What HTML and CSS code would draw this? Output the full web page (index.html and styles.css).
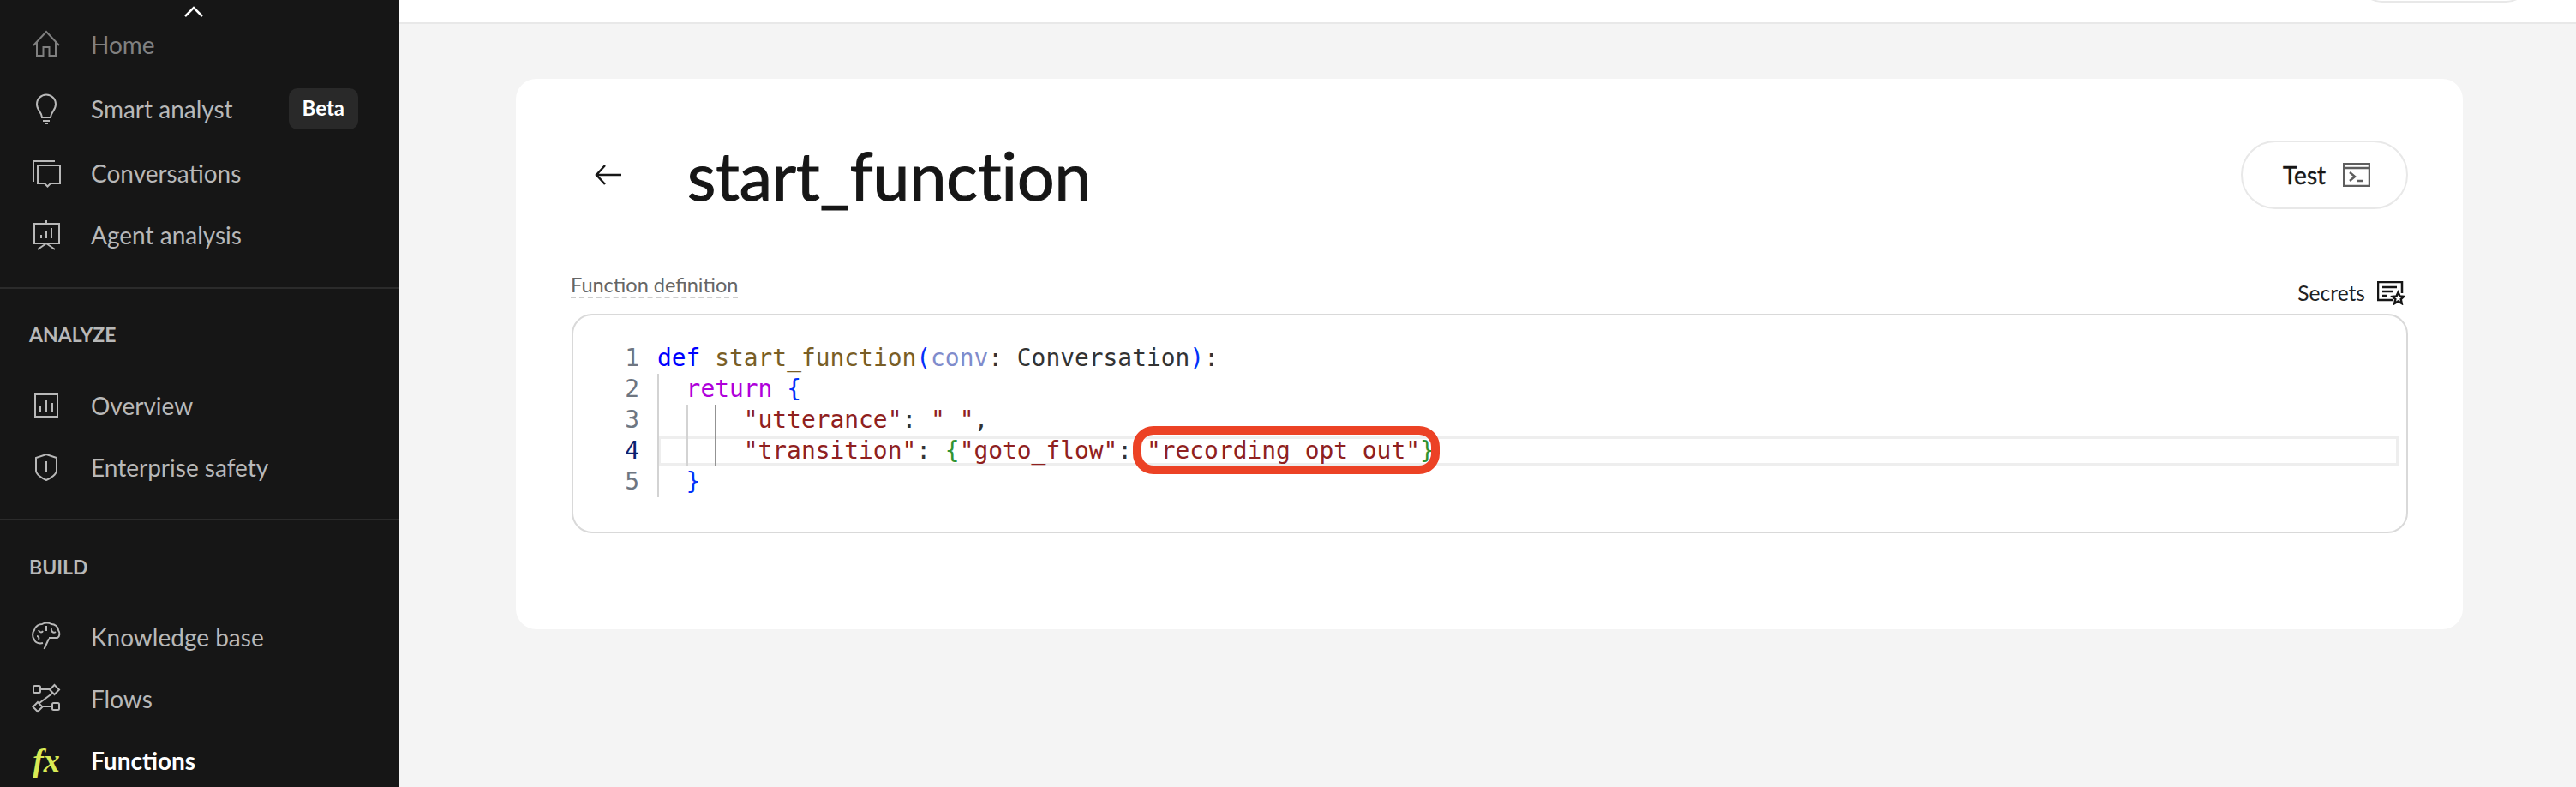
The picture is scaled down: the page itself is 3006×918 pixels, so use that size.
FILE: index.html
```html
<!DOCTYPE html>
<html lang="en">
<head>
<meta charset="utf-8">
<title>start_function</title>
<link rel="stylesheet" href="styles.css">
</head>
<body>
<div class="app">
  <aside class="sidebar">
    <svg class="chevron" width="24" height="14" viewBox="0 0 24 14"><path d="M2 12 L12 2 L22 12"/></svg>
    <section class="group group-top">
      <a class="item dim"><svg class="icon" viewBox="0 0 36 36"><path d="M3 19 L18 3 L33 19 M7 15 V31 H14.500 V21 H21.500 V31 H29 V15"/></svg><span>Home</span></a>
      <a class="item tall"><svg class="icon" viewBox="0 0 36 36"><path d="M13 28 C13 22 7 20 7 12.500 A11 11 0 0 1 29 12.500 C29 20 23 22 23 28 Z M14 32 H22 M16 35 H20"/></svg><span>Smart analyst</span><b class="beta">Beta</b></a>
      <a class="item"><svg class="icon" viewBox="0 0 36 36"><path d="M4 27 H3 V4 H28 M8 9 H34 V30 H23 L19.500 33.500 L16 30 H8 Z"/></svg><span>Conversations</span></a>
      <a class="item"><svg class="icon" viewBox="0 0 36 36"><path d="M4 5 H33 V28 H4 Z M18 1 V5 M18 28 L8 35 M18 28 L28 35 M12 22 V18 M18 22 V13 M24 22 V10"/></svg><span>Agent analysis</span></a>
    </section>
    <section class="group">
      <h2 class="heading">ANALYZE</h2>
      <a class="item"><svg class="icon" viewBox="0 0 36 36"><path d="M5 5 H31 V31 H5 Z M11 25 V19 M18 25 V11 M25 25 V15"/></svg><span>Overview</span></a>
      <a class="item"><svg class="icon" viewBox="0 0 36 36"><path d="M18 3 L30 7 V22 C30 26 23 31 18 33 C13 31 6 26 6 22 V7 Z M18 11 V23"/></svg><span>Enterprise safety</span></a>
    </section>
    <section class="group group-last">
      <h2 class="heading">BUILD</h2>
      <a class="item"><svg class="icon" viewBox="0 0 36 36"><path d="M14 25 C10 26 5 25 4 21 C1 18 2 12 4 10 C5 5 10 3 13 3 C16 1 21 1 24 3 C28 3 32 6 32 10 C34 13 34 17 31 19 H21 M21 20 L15.500 32 M9 10 C10 13 13 13 14 11 M18 5 V11 M24 8 C23 11 26 14 29 12 M7 17 C9 17 10 19 9 21"/></svg><span>Knowledge base</span></a>
      <a class="item"><svg class="icon" viewBox="0 0 36 36"><rect x="3" y="3" width="8" height="8" rx="1.500"/><rect x="25" y="23" width="8" height="8" rx="1.500"/><path d="M11 7 H22 M14 27 H25 M26 11 L10 23 M27.500 2 L33 7.500 L27.500 13 L22 7.500 Z M8 22 L13.500 27.500 L8 33 L2.500 27.500 Z"/></svg><span>Flows</span></a>
      <a class="item active"><i class="fx">fx</i><span>Functions</span></a>
    </section>
  </aside>
  <main class="main">
    <header class="topbar"><div class="top-pill"></div></header>
    <div class="content">
      <article class="card">
        <div class="title-row">
          <svg class="back" width="32" height="26" viewBox="0 0 32 26"><path d="M31 13 H2 M12 2 L2 13 L12 24"/></svg>
          <h1 class="title">start_function</h1>
          <button class="test"><span>Test</span><svg width="32" height="28" viewBox="0 0 32 28"><path d="M1 1 H31 V27 H1 Z M1 6 H31 M8 11 L14 16 L8 21 M17 21 H24"/></svg></button>
        </div>
        <div class="field-row">
          <label class="field-label">Function definition</label>
          <div class="secrets"><span>Secrets</span><svg width="32" height="28" viewBox="0 0 32 28"><path d="M19 22 H1 V1 H29 V14 M6 7 H23 M6 12 H18 M6 17 H12"/><path d="M24.500 13 L26.500 17.500 L31 18 L27.700 21 L28.700 26 L24.500 23.500 L20.300 26 L21.300 21 L18 18 L22.500 17.500 Z"/></svg></div>
        </div>
        <div class="editor">
          <div class="line"><span class="num">1</span><code class="code"><span class="kw">def</span> <span class="fn">start_function</span><span class="br">(</span><span class="param">conv</span>: Conversation<span class="br">)</span>:</code></div>
          <div class="line"><span class="num">2</span><code class="code"><i class="guide g0"></i>  <span class="ret">return</span> <span class="br">{</span></code></div>
          <div class="line"><span class="num">3</span><code class="code"><i class="guide g0"></i><i class="guide g2"></i><i class="guide g4"></i>      <span class="str">"utterance"</span>: <span class="str">" "</span>,</code></div>
          <div class="line current"><span class="num">4</span><code class="code"><i class="guide g0"></i><i class="guide g2"></i><i class="guide g4"></i>      <span class="str">"transition"</span>: <span class="br2">{</span><span class="str">"goto_flow"</span>: <span class="str">"recording opt out"</span><span class="br2">}</span></code></div>
          <div class="line"><span class="num">5</span><code class="code"><i class="guide g0"></i>  <span class="br">}</span></code></div>
          <div class="ring"></div>
        </div>
      </article>
    </div>
  </main>
</div>
</body>
</html>
```
FILE: styles.css
```css
* { box-sizing: border-box; }
html, body { margin: 0; height: 100%; overflow: hidden; }
body { font-family: "Lato", "Liberation Sans", sans-serif; background: #f4f4f4; color: #161616; }
.app { display: flex; height: 918px; }

.sidebar { position: relative; width: 466px; flex: none; background: #161616; color: #b8b8b8; overflow: hidden; }
.chevron { position: absolute; left: 214px; top: 7px; fill: none; stroke: #fff; stroke-width: 2.5; }
.group { padding: 38px 0 24px; border-bottom: 2px solid #2b2b2b; }
.group-top { padding: 16px 0 25px; }
.group-last { padding-top: 39px; border-bottom: 0; }
.group-last .heading { margin-bottom: 31px; }
.heading { margin: 0 0 32px 34px; font-size: 23px; line-height: 30px; font-weight: 700; color: #b8b8b8; }
.item { display: flex; align-items: center; height: 72px; padding-left: 36px; font-size: 28px; }
.item.tall { height: 78px; }
.item.dim { color: #808080; }
.item.active { color: #fff; font-weight: 700; }
.icon { width: 36px; height: 36px; flex: none; margin-right: 34px; fill: none; stroke: currentColor; stroke-width: 2; }
.fx { width: 36px; flex: none; margin-right: 34px; font: italic 700 38px/36px "Liberation Serif", serif; color: #d9ea55; text-align: center; }
.beta { margin-left: auto; margin-right: 48px; padding: 0 16px; height: 48px; line-height: 46px; border-radius: 10px; background: #292929; color: #fff; font-size: 24px; font-weight: 700; }

.main { flex: 1; display: flex; flex-direction: column; min-width: 0; }
.topbar { flex: none; height: 28px; background: #fff; border-bottom: 2px solid #e8e8e8; display: flex; justify-content: flex-end; padding-right: 52px; overflow: hidden; }
.top-pill { width: 204px; height: 60px; margin-top: -57px; border: 2px solid #e8e8e8; border-radius: 30px; }
.content { flex: 1; padding: 64px 132px 0 136px; }
.card { height: 642px; background: #fff; border-radius: 24px; padding: 72px 64px 0 65px; }

.title-row { display: flex; align-items: center; height: 80px; }
.back { flex: none; margin-left: 27px; fill: none; stroke: #161616; stroke-width: 2.5; }
.title { flex: 1; margin: 0 0 0 76px; font-size: 76.8px; line-height: 80px; font-weight: 400; font-variant-ligatures: none; -webkit-text-stroke: 1.1px #161616; }
.test { display: flex; align-items: center; gap: 20px; width: 195px; height: 80px; padding: 0 0 0 47px; background: #fff; border: 2px solid #e8e8e8; border-radius: 40px; font: 400 28px "Lato", sans-serif; -webkit-text-stroke: 0.5px #161616; color: #161616; }
.test svg { fill: none; stroke: #5e5e5e; stroke-width: 2.500; }

.field-row { display: flex; justify-content: space-between; align-items: flex-start; height: 40px; margin: 74px 0 8px; }
.field-label { margin-left: -1px; font-size: 23.5px; line-height: 28px; color: #666; border-bottom: 2px dashed #ccc; }
.secrets { display: flex; align-items: center; gap: 14px; margin-top: 9px; padding-right: 4px; font-size: 24.6px; color: #222; }
.secrets svg { fill: none; stroke: #161616; stroke-width: 2.500; }

.editor { position: relative; height: 256px; padding-top: 32px; border: 2px solid #d9d9d9; border-radius: 24px; font: 27.9px/36px "DejaVu Sans Mono", monospace; }
.line { display: flex; height: 36px; margin-right: 8px; }
.num { flex: none; width: 98px; padding-right: 21px; text-align: right; color: #6e7681; }
.code { position: relative; flex: 1; font: inherit; white-space: pre; color: #333; }
.current .code { box-shadow: inset 0 0 0 4px #eee; }
.current .num { color: #0b216f; }
.guide { position: absolute; top: 0; width: 2px; height: 36px; background: #d3d3d3; }
.g0 { left: 0; }
.g2 { left: 2ch; }
.g4 { left: 4ch; background: #939393; }
.kw { color: #0000ff; }
.fn { color: #795e26; }
.br { color: #0431fa; }
.br2 { color: #319331; }
.param { color: #7f8ccc; }
.ret { color: #af00db; }
.str { color: #8f2020; }
.ring { position: absolute; left: 653px; top: 129px; width: 358px; height: 56px; border: 10px solid #ec4225; border-radius: 24px; }
```
